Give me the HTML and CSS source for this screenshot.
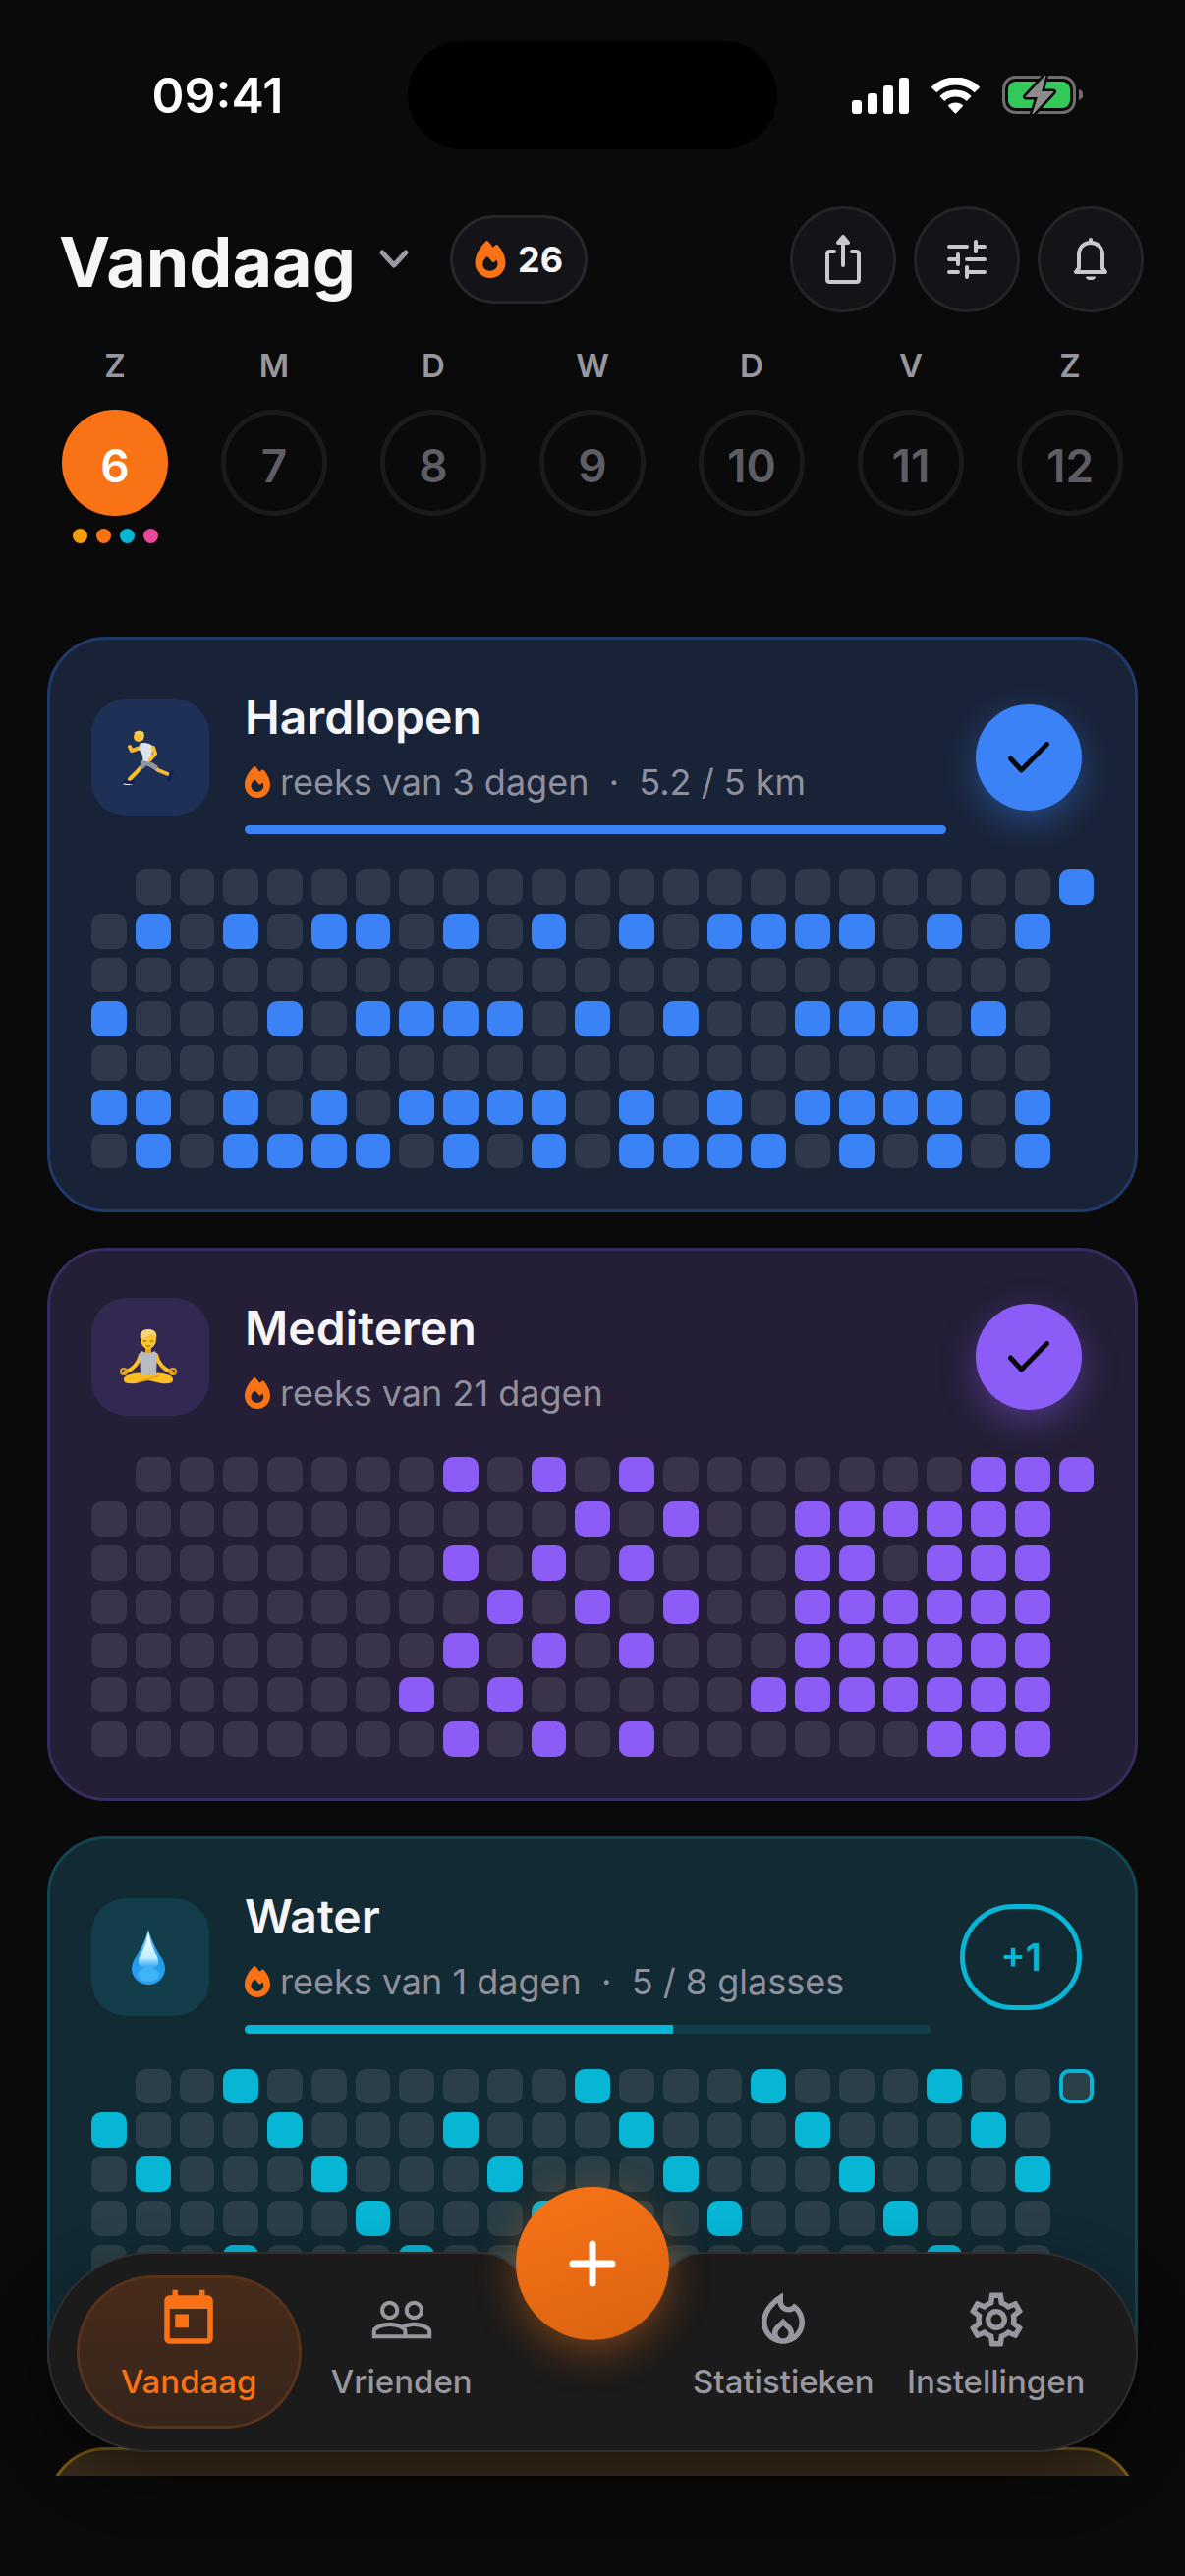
FILE: index.html
```html
<!DOCTYPE html>
<html lang="nl">
<head>
    <meta charset="utf-8">
    <meta name="viewport" content="width=device-width, initial-scale=1">
    <title>Vandaag</title>
    <link rel="stylesheet" href="styles.css">
</head>
<body>
    <svg class="defs" aria-hidden="true">
        <symbol id="flame" viewBox="0 0 31 38">
            <path fill-rule="evenodd" d="M11 .4C11.8-.2 12.6 0 13.2.6c2 2 3.600 4 4.900 6.200 1-.9 1.900-1.800 3-2.500.8-.5 1.700-.3 2.300.4C27.600 9.500 31 16 31 22.500 31 31 24.300 38 15.500 38S0 31 0 22.300C0 14.500 5 6.500 11 .4zM12.300 16C9.500 18.300 7.700 21 7.700 23.800c0 4 3.300 7 7.400 7s7.900-3 7.900-7c0-1.500-.4-3-1.300-4.300l-2.200 2.300c-.7.600-1.600.5-2.200-.2-1.600-2-3-3.900-5-5.600z"/>
        </symbol>
        <symbol id="check" viewBox="0 0 42 32">
            <path d="M2.500 17l11 12L39.500 2.500" fill="none" stroke="currentColor" stroke-width="5" stroke-linecap="round" stroke-linejoin="round"/>
        </symbol>
    </svg>

    <div class="app">
        <div class="status-bar">
            <div class="status-side"><span class="time">09:41</span></div>
            <div class="island"></div>
            <div class="status-side status-icons">
                <svg width="58" height="37" viewBox="0 0 58 37" fill="#fff">
                    <rect x="0" y="23" width="10" height="14" rx="3"/>
                    <rect x="16" y="16" width="10" height="21" rx="3"/>
                    <rect x="32" y="8" width="10" height="29" rx="3"/>
                    <rect x="48" y="0" width="10" height="37" rx="3"/>
                </svg>
                <svg width="51" height="37" viewBox="0 0 51 37" fill="none" stroke="#fff">
                    <path d="M3.500 12.500A31.500 31.500 0 0 1 47.500 12.500" stroke-width="8"/>
                    <path d="M11.800 21.500A20 20 0 0 1 39.200 21.500" stroke-width="7"/>
                    <path d="M19 28.500Q25.500 24.500 32 28.500L25.500 35.500z" fill="#fff" stroke-width="2" stroke-linejoin="round"/>
                </svg>
                <svg width="82" height="40" viewBox="0 0 82 40">
                    <rect x="1.500" y="1.500" width="72" height="36" rx="12" fill="none" stroke="#6e6e70" stroke-width="3"/>
                    <path d="M78 14c3 1 4.500 3 4.500 5.500S81 24 78 25z" fill="#6e6e70"/>
                    <rect x="6" y="6" width="63" height="27" rx="8" fill="#34c759"/>
                    <path d="M44 0L24 21.500H36.500L31 39L52 16.500H39.500z" fill="#8c8c8e" stroke="#0a0a0b" stroke-width="6" stroke-linejoin="round"/>
                    <path d="M44 0L24 21.500H36.500L31 39L52 16.500H39.500z" fill="#8c8c8e" stroke="#8c8c8e" stroke-width="1" stroke-linejoin="round"/>
                </svg>
            </div>
        </div>

        <header class="header">
            <button class="title-button">
                <h1>Vandaag</h1>
                <svg width="30" height="20" viewBox="0 0 30 20" fill="none" stroke="#9a9aa2" stroke-width="5" stroke-linecap="round" stroke-linejoin="round"><path d="M3 3l12 13L27 3"/></svg>
            </button>
            <div class="streak-pill">
                <svg class="flame" width="32" height="38"><use href="#flame"/></svg>
                <span>26</span>
            </div>
            <div class="header-actions">
                <button class="round-button" aria-label="Delen">
                    <svg width="36" height="50" viewBox="0 0 36 50" fill="none" stroke="currentColor" stroke-width="4" stroke-linecap="round" stroke-linejoin="round">
                        <path d="M9 17H4.500Q2 17 2 19.500V45.500Q2 48 4.500 48H31.500Q34 48 34 45.500V19.500Q34 17 31.500 17H27"/>
                        <path d="M18 31V5"/>
                        <path d="M18 2l5 6H13z" fill="currentColor"/>
                    </svg>
                </button>
                <button class="round-button" aria-label="Filters">
                    <svg width="40" height="40" viewBox="0 0 40 40" fill="none" stroke="currentColor" stroke-width="4" stroke-linecap="round">
                        <path d="M2 7H20M29 2V12M29 7H38M2 20H9M11 15V25M20 20H38M2 33H11M20 28V38M20 33H38"/>
                    </svg>
                </button>
                <button class="round-button" aria-label="Meldingen">
                    <svg width="34" height="44" viewBox="0 0 34 44" fill="none" stroke="currentColor" stroke-width="4" stroke-linecap="round" stroke-linejoin="round">
                        <path d="M2 35H32L29 31V17C29 10 24 5 17 5S5 10 5 17V31z"/>
                        <path d="M17 2V4"/>
                        <path d="M13 40.500H21L19 42H15z" stroke-width="2" fill="currentColor"/>
                    </svg>
                </button>
            </div>
        </header>

        <div class="week">
            <div class="day today">
                <span class="day-name">Z</span>
                <button class="day-number">6</button>
                <div class="dots"><i class="dot amber"></i><i class="dot orange"></i><i class="dot cyan"></i><i class="dot pink"></i></div>
            </div>
            <div class="day"><span class="day-name">M</span><button class="day-number">7</button></div>
            <div class="day"><span class="day-name">D</span><button class="day-number">8</button></div>
            <div class="day"><span class="day-name">W</span><button class="day-number">9</button></div>
            <div class="day"><span class="day-name">D</span><button class="day-number">10</button></div>
            <div class="day"><span class="day-name">V</span><button class="day-number">11</button></div>
            <div class="day"><span class="day-name">Z</span><button class="day-number">12</button></div>
        </div>

        <main class="habits">
            <section class="card blue">
                <div class="card-head">
                    <div class="habit-icon">
                        <svg width="52" height="56" viewBox="0 0 52 56" fill="none" stroke-linecap="round" stroke-linejoin="round">
                            <path d="M18 18L9 21L7 17" stroke="#f5b82e" stroke-width="4"/>
                            <path d="M22 34L14 43L7 50" stroke="#fbc02d" stroke-width="4"/>
                            <path d="M28 35L36 41L46 45" stroke="#f5b82e" stroke-width="4"/>
                            <path d="M2 52Q5 55 10 53" stroke="#12205c" stroke-width="4"/>
                            <path d="M1 55L9 56" stroke="#fff" stroke-width="1"/>
                            <path d="M50 43L47 51" stroke="#12205c" stroke-width="4"/>
                            <path d="M21 33L28 35L33 38M23 33L20 37" stroke="#8f959e" stroke-width="5"/>
                            <path d="M18 14Q25 12 31 17L27 32L21 31Q21 24 17 20z" fill="#dfe2e8" stroke="#dfe2e8" stroke-width="1"/>
                            <path d="M31 18L33 24L28 30" stroke="#fbc02d" stroke-width="4"/>
                            <circle cx="16" cy="7" r="5" fill="#fbc02d"/>
                            <path d="M11 3Q16-1 21 2Q23 7 20 11Q18 9 18 5Q14 5 11 3z" fill="#f2cf57"/>
                        </svg>
                    </div>
                    <div class="habit-text">
                        <h2>Hardlopen</h2>
                        <p><svg class="flame" width="26" height="32"><use href="#flame"/></svg>reeks van 3 dagen &nbsp;·&nbsp; 5.2 / 5 km</p>
                        <div class="bar"><div class="bar-fill" style="width: 100%"></div></div>
                    </div>
                    <button class="check-button" aria-label="Hardlopen voltooid"><svg width="42" height="32"><use href="#check"/></svg></button>
                </div>
                <div class="heatmap" data-habit="hardlopen"></div>
            </section>

            <section class="card purple">
                <div class="card-head">
                    <div class="habit-icon">
                        <svg width="58" height="56" viewBox="0 0 58 56" stroke-linecap="round" stroke-linejoin="round">
                            <path d="M21 26Q18 39 5 44M37 26Q40 39 53 44" fill="none" stroke="#fbbf24" stroke-width="4"/>
                            <circle cx="4" cy="43" r="3" fill="none" stroke="#e8a317" stroke-width="2"/>
                            <circle cx="54" cy="43" r="3" fill="none" stroke="#e8a317" stroke-width="2"/>
                            <path d="M7 47Q20 42 29 47Q38 42 51 47Q56 50 53 54Q49 56 42 55L29 52L16 55Q9 56 5 54Q2 50 7 47z" fill="#fbbf24"/>
                            <path d="M18 54L40 47" stroke="#d9930f" stroke-width="1" fill="none"/>
                            <path d="M26 17H32V24H26z" fill="#e8a317"/>
                            <path d="M22 22Q29 26 36 22L38 26L37 46Q29 48 21 46L20 26z" fill="#b8bcc2"/>
                            <ellipse cx="29" cy="10" rx="8" ry="10" fill="#fcc631"/>
                            <path d="M21 10Q19 0 29 0Q39 0 37 10Q36 5 33 5Q25 9 21 10z" fill="#f3d77c"/>
                            <path d="M24 12H27M31 12H34M27 17H31" stroke="#8a5a10" stroke-width="1" fill="none"/>
                        </svg>
                    </div>
                    <div class="habit-text">
                        <h2>Mediteren</h2>
                        <p><svg class="flame" width="26" height="32"><use href="#flame"/></svg>reeks van 21 dagen</p>
                    </div>
                    <button class="check-button" aria-label="Mediteren voltooid"><svg width="42" height="32"><use href="#check"/></svg></button>
                </div>
                <div class="heatmap" data-habit="mediteren"></div>
            </section>

            <section class="card cyan">
                <div class="card-head">
                    <div class="habit-icon">
                        <svg width="34" height="56" viewBox="0 0 34 56">
                            <defs>
                                <linearGradient id="drop" x1="0" y1="0" x2="0" y2="1"><stop offset="0" stop-color="#7fd4ff"/><stop offset=".5" stop-color="#1f9cf0"/><stop offset="1" stop-color="#2a9ff2"/></linearGradient>
                                <linearGradient id="shine" x1="0" y1="0" x2="0" y2="1"><stop offset="0" stop-color="#fff"/><stop offset=".7" stop-color="#bfeeff"/><stop offset="1" stop-color="#4db8ff" stop-opacity=".3"/></linearGradient>
                            </defs>
                            <path d="M17 0Q20 12 28 25Q34 33 34 40A17 16 0 0 1 0 40Q0 33 6 25Q14 12 17 0z" fill="url(#drop)"/>
                            <path d="M17 3Q19 14 24 24Q28 30 27 35Q24 40 17 40T7 35Q6 30 10 24Q15 14 17 3z" fill="url(#shine)"/>
                            <ellipse cx="17" cy="46" rx="11" ry="7" fill="#5cc8ff" opacity=".5"/>
                        </svg>
                    </div>
                    <div class="habit-text">
                        <h2>Water</h2>
                        <p><svg class="flame" width="26" height="32"><use href="#flame"/></svg>reeks van 1 dagen &nbsp;·&nbsp; 5 / 8 glasses</p>
                        <div class="bar"><div class="bar-fill" style="width: 62.5%"></div></div>
                    </div>
                    <button class="add-button">+1</button>
                </div>
                <div class="heatmap" data-habit="water"></div>
            </section>

            <section class="card amber"></section>
        </main>

        <nav class="tab-bar">
            <!-- bar outline with a dip under the add button -->
            <svg class="tab-bar-shape" viewBox="0 0 1110 204" preserveAspectRatio="none">
                <path d="M106 1H440C458 1 468 8 477 18Q555 110 633 18C642 8 652 1 670 1H1004A105 101 0 0 1 1004 203H106A105 101 0 0 1 106 1z"/>
            </svg>
            <a class="tab active" href="#vandaag">
                <svg width="66" height="66" viewBox="0 0 24 24"><path d="M19 3h-1V1h-2v2H8V1H6v2H5c-1.110 0-1.990.9-1.990 2L3 19c0 1.100.89 2 2 2h14c1.100 0 2-.9 2-2V5c0-1.100-.9-2-2-2zm0 16H5V8h14v11zM7 10h5v5H7z"/></svg>
                <span>Vandaag</span>
            </a>
            <a class="tab" href="#vrienden">
                <svg width="66" height="66" viewBox="0 0 24 24"><path d="M16.500 13c-1.200 0-3.070.34-4.500 1-1.430-.67-3.300-1-4.500-1C5.330 13 1 14.080 1 16.250V19h22v-2.750c0-2.170-4.330-3.250-6.500-3.250zm-4 4.500h-10v-1.250c0-.54 2.560-1.750 5-1.750s5 1.210 5 1.750v1.250zm9 0H14v-1.250c0-.46-.2-.86-.52-1.220.88-.3 1.960-.53 3.020-.53 2.440 0 5 1.210 5 1.750v1.250zM7.500 12c1.930 0 3.500-1.570 3.500-3.500S9.430 5 7.500 5 4 6.570 4 8.500 5.570 12 7.500 12zm0-5.500c1.100 0 2 .9 2 2s-.9 2-2 2-2-.9-2-2 .9-2 2-2zm9 5.500c1.930 0 3.500-1.570 3.500-3.500S18.430 5 16.500 5 13 6.570 13 8.500s1.570 3.500 3.500 3.500zm0-5.500c1.100 0 2 .9 2 2s-.9 2-2 2-2-.9-2-2 .9-2 2-2z"/></svg>
                <span>Vrienden</span>
            </a>
            <button class="fab" aria-label="Gewoonte toevoegen">
                <svg width="48" height="48" viewBox="0 0 48 48" stroke="#fff" stroke-width="7" stroke-linecap="round"><path d="M24 4V44M4 24H44"/></svg>
            </button>
            <a class="tab" href="#statistieken">
                <svg width="66" height="66" viewBox="0 0 24 24"><path d="M16 6l-.44.55c-.42.52-.98.75-1.540.75C13 7.300 12 6.520 12 5.300V2S4 6 4 13c0 4.420 3.580 8 8 8s8-3.580 8-8c0-2.960-1.610-5.620-4-7zm-4 13c-1.100 0-2-.87-2-1.940 0-.51.2-.99.58-1.360l1.420-1.400 1.430 1.400c.37.37.57.85.57 1.360 0 1.070-.9 1.940-2 1.940zm3.960-1.500c.04-.36.22-1.890-1.130-3.220L12 11.500l-2.830 2.780C7.810 15.620 8 17.160 8.040 17.500 6.790 16.400 6 14.790 6 13c0-3.160 2.130-5.650 4.030-7.250.23 1.990 1.930 3.550 3.990 3.550.78 0 1.540-.23 2.180-.66C17.340 9.780 18 11.350 18 13c0 1.790-.79 3.400-2.040 4.500z"/></svg>
                <span>Statistieken</span>
            </a>
            <a class="tab" href="#instellingen">
                <svg width="66" height="66" viewBox="0 0 24 24"><path d="M19.430 12.980c.04-.32.07-.64.07-.98 0-.34-.03-.66-.07-.98l2.110-1.650c.19-.15.24-.42.12-.64l-2-3.460c-.09-.16-.26-.25-.44-.25-.06 0-.12.01-.17.03l-2.490 1c-.52-.4-1.080-.73-1.690-.98l-.38-2.650C14.460 2.180 14.250 2 14 2h-4c-.25 0-.46.18-.49.42l-.38 2.650c-.61.25-1.170.59-1.690.98l-2.490-1c-.06-.02-.12-.03-.18-.03-.17 0-.34.09-.43.25l-2 3.460c-.13.22-.07.49.12.64l2.110 1.650c-.04.32-.07.65-.07.98 0 .33.03.66.07.98l-2.110 1.650c-.19.15-.24.42-.12.64l2 3.460c.09.16.26.25.44.25.06 0 .12-.01.17-.03l2.490-1c.52.4 1.080.73 1.690.98l.38 2.650c.03.24.24.42.49.42h4c.25 0 .46-.18.49-.42l.38-2.650c.61-.25 1.170-.59 1.690-.98l2.490 1c.06.02.12.03.18.03.17 0 .34-.09.43-.25l2-3.460c.12-.22.07-.49-.12-.64l-2.110-1.650zm-1.980-1.710c.04.31.05.52.05.73 0 .21-.02.43-.05.73l-.14 1.130.89.7 1.080.84-.7 1.210-1.270-.51-1.040-.42-.9.68c-.43.32-.84.56-1.250.73l-1.060.43-.16 1.130-.2 1.350h-1.400l-.19-1.350-.16-1.130-1.060-.43c-.43-.18-.83-.41-1.230-.71l-.91-.7-1.060.43-1.270.51-.7-1.210 1.080-.84.89-.7-.14-1.130c-.03-.31-.05-.54-.05-.74s.02-.43.05-.73l.14-1.130-.89-.7-1.080-.84.7-1.210 1.270.51 1.040.42.9-.68c.43-.32.84-.56 1.250-.73l1.060-.43.16-1.130.2-1.350h1.390l.19 1.350.16 1.130 1.060.43c.43.18.83.41 1.230.71l.91.7 1.060-.43 1.270-.51.7 1.210-1.070.85-.89.7.14 1.130zM12 8c-2.210 0-4 1.790-4 4s1.790 4 4 4 4-1.790 4-4-1.790-4-4-4zm0 6c-1.100 0-2-.9-2-2s.9-2 2-2 2 .9 2 2-.9 2-2 2z"/></svg>
                <span>Instellingen</span>
            </a>
        </nav>
    </div>

    <script src="script.js"></script>
</body>
</html>
```

FILE: styles.css
```css
* {
    box-sizing: border-box;
}
body {
    margin: 0;
    background: #0a0a0b;
    color: #f5f5f7;
    font-family: Inter, "Liberation Sans", sans-serif;
}
h1, h2, p {
    margin: 0;
}
button {
    padding: 0;
    border: none;
    background: none;
    color: inherit;
    font-family: inherit;
    cursor: pointer;
}
svg {
    display: block;
    flex: none;
}
.defs {
    display: none;
}
.flame {
    fill: #f97316;
}
.app {
    position: relative;
    display: flex;
    flex-direction: column;
    height: 100vh;
    padding-bottom: 102px;
    overflow: hidden;
}

/* status bar */
.status-bar {
    display: flex;
    align-items: center;
    padding: 42px 28px 0;
}
.status-side {
    flex: 1;
    display: flex;
    justify-content: center;
    align-items: center;
}
.status-icons {
    gap: 22px;
}
.time {
    font-size: 50px;
    font-weight: 600;
    color: #fff;
}
.island {
    width: 376px;
    height: 110px;
    border-radius: 55px;
    background: #000;
}

/* header */
.header {
    display: flex;
    align-items: center;
    padding: 58px 42px 0 60px;
}
.title-button {
    display: flex;
    align-items: center;
    gap: 24px;
}
h1 {
    padding-top: 6px;
    font-size: 70px;
    font-weight: 700;
    line-height: 84px;
}
.streak-pill {
    display: flex;
    align-items: center;
    gap: 12px;
    height: 90px;
    margin-left: 42px;
    padding: 0 22px;
    border: 3px solid #26262b;
    border-radius: 45px;
    background: #141318;
    font-size: 36px;
    font-weight: 700;
}
.header-actions {
    display: flex;
    gap: 18px;
    margin-left: auto;
}
.round-button {
    display: flex;
    align-items: center;
    justify-content: center;
    width: 108px;
    height: 108px;
    border: 3px solid #232328;
    border-radius: 50%;
    background: #141318;
    color: #c9c8ce;
}

/* week strip */
.week {
    display: flex;
    height: 330px;
    flex: none;
    padding: 34px 36px 0;
}
.day {
    flex: 1;
    display: flex;
    flex-direction: column;
    align-items: center;
}
.day-name {
    margin-bottom: 25px;
    font-size: 33px;
    font-weight: 600;
    line-height: 40px;
    color: #97979f;
}
.day-number {
    width: 108px;
    height: 108px;
    padding-top: 6px;
    border: 5px solid #1a1a1c;
    border-radius: 50%;
    font-size: 46px;
    font-weight: 600;
    color: #5d5d62;
}
.today .day-number {
    border-color: #f97316;
    background: #f97316;
    color: #fff;
}
.dots {
    display: flex;
    gap: 9px;
    margin-top: 13px;
}
.dot {
    width: 15px;
    height: 15px;
    border-radius: 50%;
}
.dot.amber { background: #f59e0b; }
.dot.orange { background: #f97316; }
.dot.cyan { background: #06b6d4; }
.dot.pink { background: #ec4899; }

/* habit cards */
.habits {
    flex: 1;
    min-height: 0;
    display: flex;
    flex-direction: column;
    gap: 36px;
    padding: 0 48px;
    overflow: hidden;
}
.card {
    flex: none;
    padding: 42px;
    border: 3px solid var(--line);
    border-radius: 60px;
    background: var(--bg);
}
.card.blue {
    --accent: #3b82f6;
    --bg: #192338;
    --line: #1f3a68;
    --tile: #1e3055;
    --glow: rgba(59, 130, 246, 0.4);
}
.card.purple {
    --accent: #8b5cf6;
    --bg: #241e36;
    --line: #382b60;
    --tile: #322852;
    --glow: rgba(139, 92, 246, 0.4);
}
.card.cyan {
    --accent: #06b6d4;
    --bg: #122a33;
    --line: #134552;
    --tile: #123e4b;
}
.card.amber {
    --bg: #3a2c1b;
    --line: #7d5b12;
    min-height: 500px;
}
.card-head {
    display: flex;
    align-items: center;
    margin-bottom: 36px;
}
.habit-icon {
    display: flex;
    align-items: center;
    justify-content: center;
    flex: none;
    width: 120px;
    height: 120px;
    margin-right: 36px;
    padding-right: 4px;
    border-radius: 36px;
    background: var(--tile);
}
.habit-text {
    flex: 1;
    min-width: 0;
}
h2 {
    font-size: 48px;
    font-weight: 600;
    line-height: 74px;
}
.habit-text p {
    display: flex;
    align-items: center;
    gap: 10px;
    font-size: 36px;
    line-height: 58px;
    color: #8f909d;
}
.bar {
    height: 9px;
    margin-top: 15px;
    border-radius: 5px;
    background: var(--tile);
    overflow: hidden;
}
.bar-fill {
    height: 100%;
    background: var(--accent);
}
.check-button,
.add-button {
    display: flex;
    align-items: center;
    justify-content: center;
    flex: none;
    width: 108px;
    height: 108px;
    margin: 0 12px 0 30px;
    border-radius: 54px;
}
.check-button {
    background: var(--accent);
    box-shadow: 0 12px 36px var(--glow);
    color: #0a0a0b;
}
.add-button {
    width: 124px;
    border: 5px solid var(--accent);
    color: var(--accent);
    font-size: 38px;
    font-weight: 600;
}
.heatmap {
    display: grid;
    grid-template-columns: repeat(23, 1fr);
    gap: 9px;
}
.cell {
    aspect-ratio: 1;
    border-radius: 10px;
    background: rgba(255, 255, 255, 0.1);
}
.cell.done {
    background: var(--accent);
}
.cell.blank {
    background: none;
}
.cell.current {
    border: 4px solid var(--accent);
}

/* tab bar floats over the list */
.tab-bar {
    position: absolute;
    left: 48px;
    right: 48px;
    bottom: 126px;
    display: grid;
    grid-template-columns: 1fr 1fr 172px 1fr 1fr;
    height: 204px;
    padding: 24px 36px;
    border-radius: 102px;
    box-shadow: 0 24px 60px rgba(0, 0, 0, 0.45);
}
.tab-bar-shape {
    position: absolute;
    inset: 0;
    width: 100%;
    height: 100%;
    fill: #1b1b1b;
    stroke: #2e2e2e;
    stroke-width: 2;
}
.tab {
    position: relative;
    display: flex;
    flex-direction: column;
    align-items: center;
    gap: 9px;
    margin: 0 -6px;
    padding-top: 9px;
    border: 3px solid transparent;
    border-radius: 78px;
    color: #98979f;
    font-size: 33px;
    font-weight: 500;
    line-height: 42px;
    text-decoration: none;
}
.tab svg {
    fill: currentColor;
}
.tab.active {
    border-color: #58321a;
    background: linear-gradient(#472b1a, #36251b);
    color: #f97316;
}
.fab {
    position: relative;
    display: flex;
    align-items: center;
    justify-content: center;
    justify-self: center;
    width: 156px;
    height: 156px;
    margin-top: -90px;
    border-radius: 50%;
    background: linear-gradient(160deg, #f97316, #d96310);
    box-shadow: 0 12px 42px rgba(249, 115, 22, 0.4);
}
```

FILE: script.js
```js
// indexes of completed weeks per weekday row
const habits = {
    hardlopen: [
        [22],
        [1, 3, 5, 6, 8, 10, 12, 14, 15, 16, 17, 19, 21],
        [],
        [0, 4, 6, 7, 8, 9, 11, 13, 16, 17, 18, 20],
        [],
        [0, 1, 3, 5, 7, 8, 9, 10, 12, 14, 16, 17, 18, 19, 21],
        [1, 3, 4, 5, 6, 8, 10, 12, 13, 14, 15, 17, 19, 21]
    ],
    mediteren: [
        [8, 10, 12, 20, 21, 22],
        [11, 13, 16, 17, 18, 19, 20, 21],
        [8, 10, 12, 16, 17, 19, 20, 21],
        [9, 11, 13, 16, 17, 18, 19, 20, 21],
        [8, 10, 12, 16, 17, 18, 19, 20, 21],
        [7, 9, 15, 16, 17, 18, 19, 20, 21],
        [8, 10, 12, 19, 20, 21]
    ],
    water: [
        [3, 11, 15, 19],
        [0, 4, 8, 12, 16, 20],
        [1, 5, 9, 13, 17, 21],
        [6, 10, 14, 18],
        [3, 7, 11, 19],
        [0, 4, 8, 12, 16, 20],
        [1, 5, 9, 13, 17, 21]
    ]
};
const WEEKS = 23;

document.querySelectorAll('.heatmap').forEach(map => {
    habits[map.dataset.habit].forEach((done, row) => {
        for (let week = 0; week < WEEKS; week++) {
            const cell = document.createElement('div');
            cell.className = 'cell';
            const isToday = row === 0 && week === WEEKS - 1;
            if ((row === 0 && week === 0) || (row > 0 && week === WEEKS - 1)) {
                cell.classList.add('blank');
            } else if (done.includes(week)) {
                cell.classList.add('done');
            } else if (isToday) {
                cell.classList.add('current');
            }
            map.appendChild(cell);
        }
    });
});
```
